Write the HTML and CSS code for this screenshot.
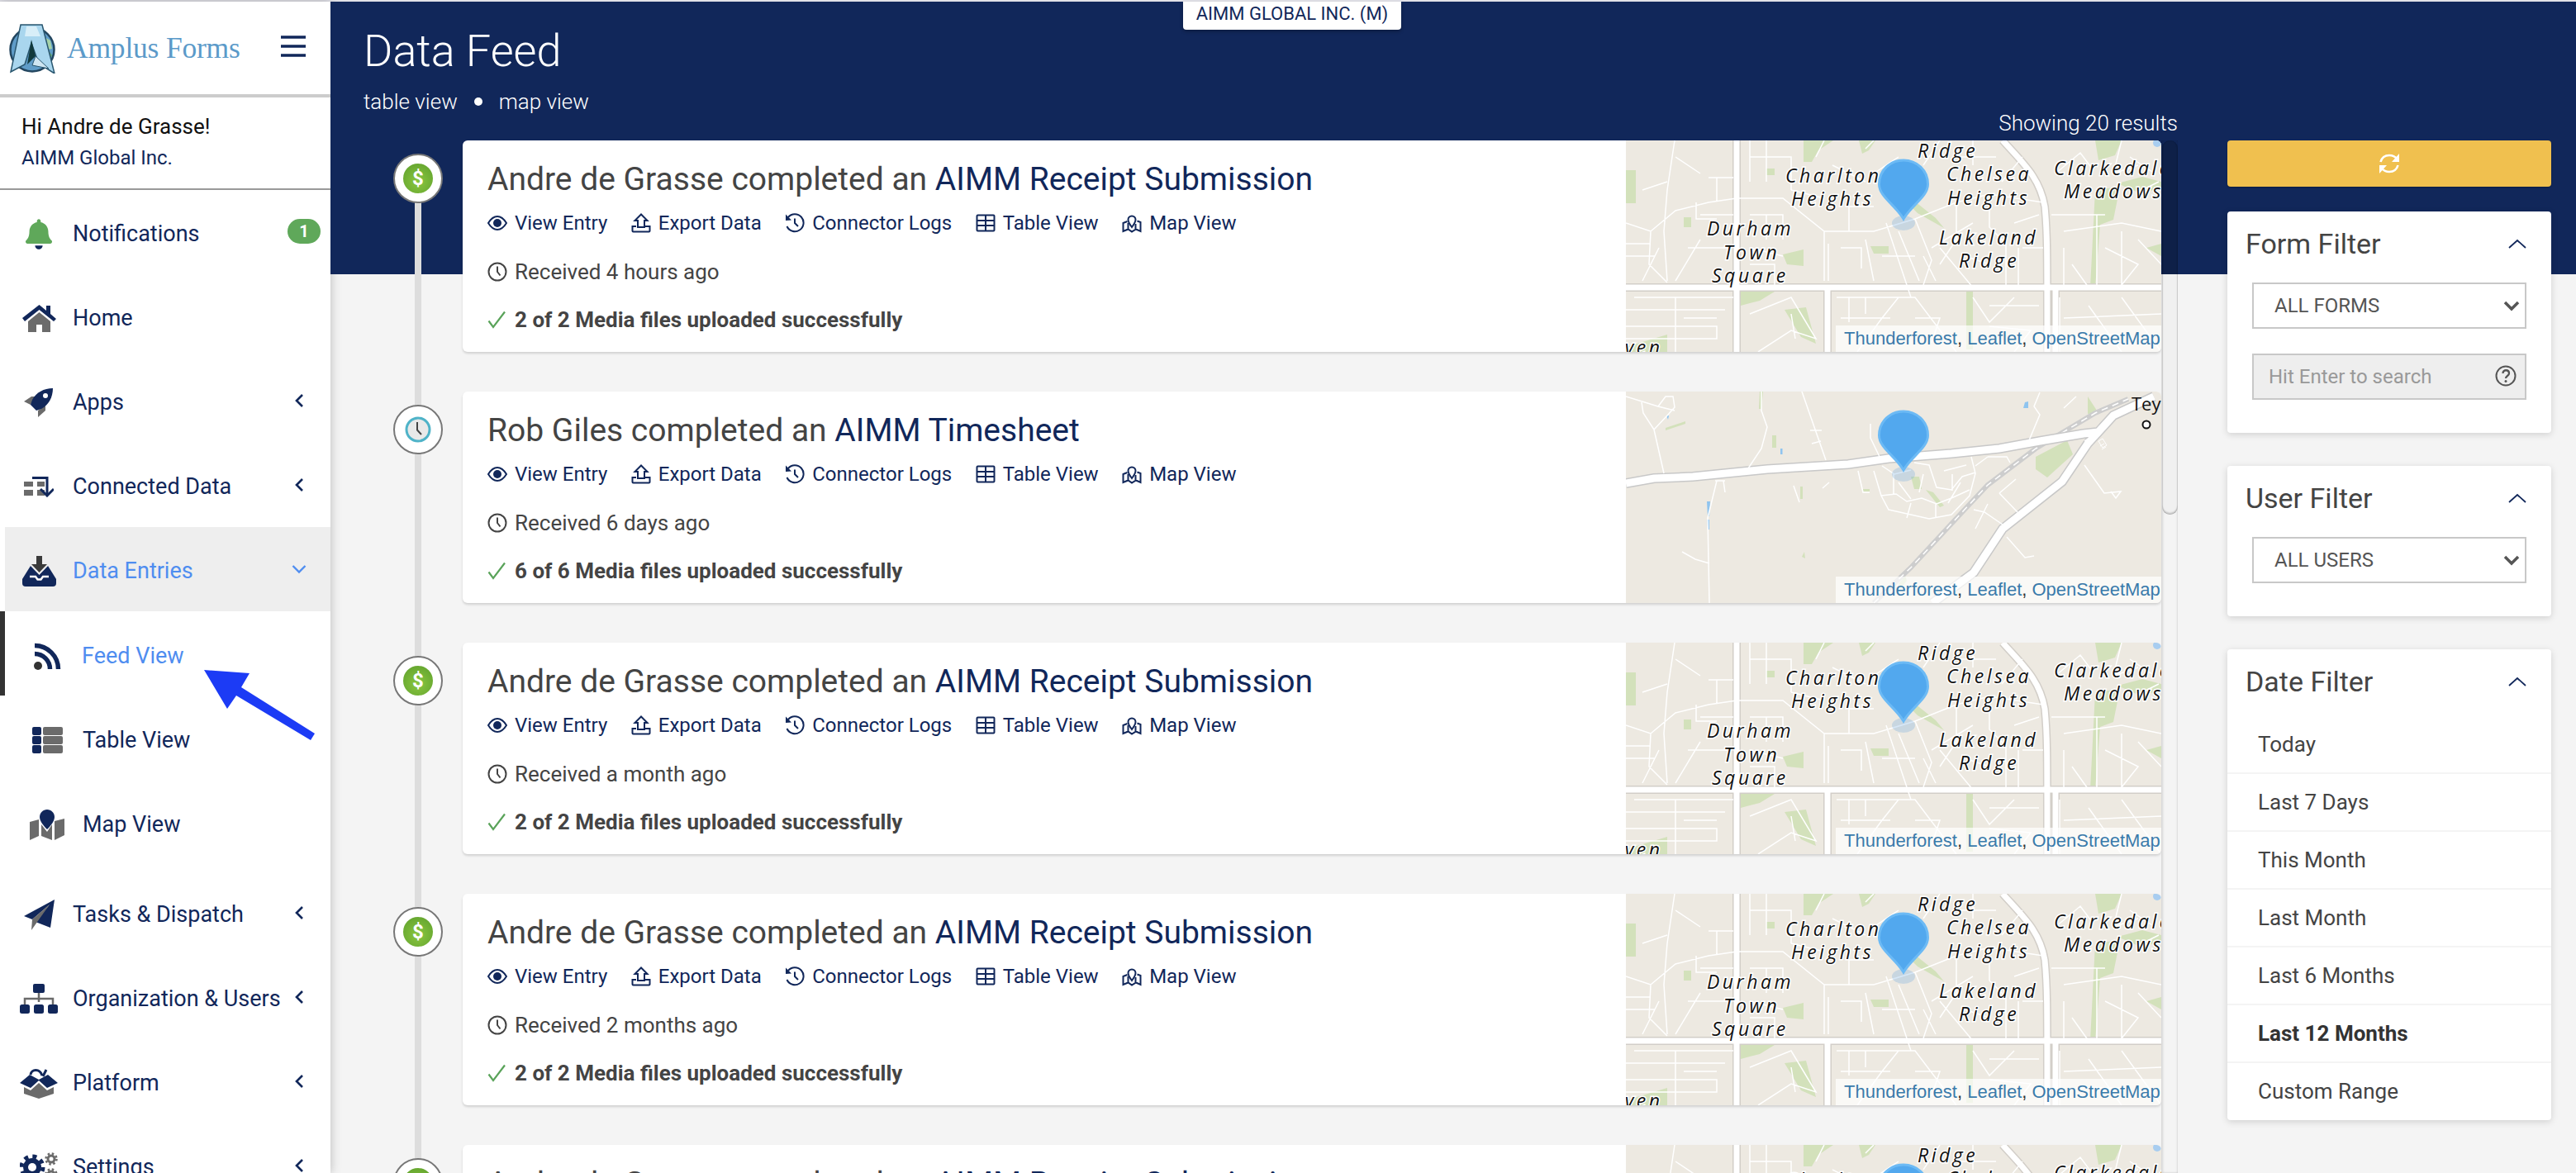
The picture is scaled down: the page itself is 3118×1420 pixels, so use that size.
FILE: index.html
```html
<!DOCTYPE html>
<html lang="en">
<head>
<meta charset="utf-8">
<title>Data Feed</title>
<link rel="stylesheet" href="styles.css">
</head>
<body>
<svg class="defs" width="0" height="0" aria-hidden="true">
  <defs>
    <symbol id="i-eye" viewBox="0 0 24 24"><path class="ln" d="M1 12C5 5.500 9 4 12 4s7 1.500 11 8c-4 6.500-8 8-11 8s-7-1.500-11-8z"/><circle class="fl" cx="12" cy="12" r="5"/></symbol>
    <symbol id="i-export" viewBox="0 0 24 24"><path class="ln" d="M6 16H1.500v5.500a1 1 0 0 0 1 1h19a1 1 0 0 0 1-1V16H17"/><path class="ln" d="M12 1.500 4.500 9H8v8h8V9h3.500z"/></symbol>
    <symbol id="i-logs" viewBox="0 0 24 24"><path class="ln" d="M4 5a10.500 10.500 0 1 1-1.500 11"/><path class="fl" d="M1 1.500 8 8.500 1 9z"/><path class="ln" d="M12 6.500V12l4 4"/></symbol>
    <symbol id="i-table" viewBox="0 0 24 24"><rect class="ln" x="1.500" y="2.500" width="21" height="19" rx="1"/><path class="ln" d="M1.500 9h21M1.500 15h21M12 2.500v19"/></symbol>
    <symbol id="i-map" viewBox="0 0 24 24"><path class="ln" d="M12 17c-3-4-4.500-6-4.500-9a4.500 4.500 0 0 1 9 0c0 3-1.500 5-4.500 9z"/><path class="ln" d="M6.500 10 1.500 12v10l6-2.500 4.500 3 5-3 5.500 2.500V11l-4-1.500M7.500 12v7M16.500 13v6.500"/></symbol>
    <symbol id="i-clock" viewBox="0 0 24 24"><circle cx="12" cy="12" r="10.500" fill="none" stroke="#444" stroke-width="2"/><path d="M12 5.500V12l3.500 4.500" fill="none" stroke="#444" stroke-width="2"/></symbol>
    <symbol id="i-check" viewBox="0 0 24 24"><path d="M1.500 13.500 7 21 21 2.500" fill="none" stroke="#5aa35a" stroke-width="2.200"/></symbol>

    <symbol id="map-a" viewBox="0 0 648 256">
      <rect width="648" height="256" fill="#ede9e1"/>
      <g fill="#d3e1bb">
        <rect x="0" y="36" width="12" height="40"/>
        <path d="M215 0h36l-18 12-8 14h-10z"/>
        <path d="M139 183h41l-18 11-12 3-11 3z"/>
        <path d="M192 205l26-3 12 44-18-8z"/>
        <path d="M0 250l50-15v21H0z"/>
        <path d="M568 0h32l-8 18-20 6z"/>
        <path d="M345 70l30 24 10 12-32-18-8-8z"/>
        <path d="M296 128h22v9h-18z"/>
        <path d="M190 138l25-6v20l-20-2z"/>
        <rect x="70" y="93" width="9" height="12"/>
        <rect x="170" y="34" width="10" height="8"/>
        <path d="M568 60l30-4-8 40-16 6-6 76h-6z"/>
        <rect x="412" y="183" width="8" height="70"/>
        <path d="M630 130l18-5v15z"/>
        <path d="M595 52l30-8 23 6v10l-30 2z"/>
        <path d="M282 0h20l-8 12-8 4z"/>
      </g>
      <circle cx="643" cy="3" r="5" fill="#a8cdf0"/>
      <path d="M134 0v256M0 178h648M456 0c25 28 45 45 51 80 3 30 3 50 3 176M244 178v78M520 178v78" fill="none" stroke="#d2cec8" stroke-width="10"/>
      <path d="M134 0v256M0 178h648M456 0c25 28 45 45 51 80 3 30 3 50 3 176M244 178v78M520 178v78" fill="none" stroke="#fff" stroke-width="7"/>
      <path d="M59 0 50 60l-4 50 4 60M0 100l30 10 30-25 40-10 34-5M30 110l-2 40 22 22M134 70h56l50 40h60l50-15 50-20 40-10 65 10M150 0v50M150 20h50v40M170 20v30M230 20l10-20M250 30l40 20M290 10l10-10M315 100l30 90M330 110l25 60M290 120l10 50M370 130l50-30M360 140l15 30M380 130l40 48M515 90h65M570 90v88M530 110l70-10 48 10M530 130v48M540 150l20 28M600 110v68M620 120l28 30M0 205h120M0 225h110v15H0M60 190v66M10 190h120M150 210l50-20 30 50-30-10-40 26M255 190h95l50 66M270 190v30M290 190v20M330 190l-20 25-30 41M420 190l20 30 30-30M440 200h60M525 190v66M530 215l118-5M560 200l40 56M600 190l48 66M170 0v20M200 60l40 10M60 20l30 20M20 60l30-10M240 110v60M350 95l20 50-10 30M400 75v45l-20 30M440 65v40l20 20v50M270 110V80h30M300 40l30-20M360 30l20-30M398 20h50M420 0v30M0 125h30M0 140h35M40 130l-20 40M85 75v20h25M90 90h40M100 45h30M110 45v28M150 90h40v30M170 90v30M150 130l40 10M260 130h25v25M245 125v45M310 140h40M410 140l30 10M470 100l30-10M480 130h25M475 130v45M150 150h30v25M90 120l-30 50M75 130h50M580 130l40 20-20 25M625 60l20-10M610 20l30 20M600 0l-10 40 30-10M480 20l-25 30M520 40l30-25 15 20M200 210l5 30M260 215h60M350 215h30l-10 30M440 225l50 5-20 26M545 235h60M70 215h40" fill="none" stroke="#fff" stroke-width="1.500"/>
      <g class="map-label">
        <text x="353" y="21">Ridge</text>
        <text x="193" y="51">Charlton</text>
        <text x="200" y="79">Heights</text>
        <text x="388" y="49">Chelsea</text>
        <text x="389" y="78">Heights</text>
        <text x="518" y="42">Clarkedale</text>
        <text x="530" y="70">Meadows</text>
        <text x="98" y="115">Durham</text>
        <text x="118" y="144">Town</text>
        <text x="104" y="172">Square</text>
        <text x="379" y="126">Lakeland</text>
        <text x="403" y="154">Ridge</text>
        <text x="-37" y="259">Haven</text>
      </g>
      <ellipse cx="336" cy="100" rx="14" ry="9" fill="#5aa0e1" fill-opacity=".25"/>
      <path d="M336 95c-10-17-29.500-27-29.500-42 0-17 13.500-29 29.500-29s29.500 12 29.500 29c0 15-19.500 25-29.500 42z" fill="#52a8ee" stroke="#6cbaf5" stroke-width="3"/>
    </symbol>

    <symbol id="map-b" viewBox="0 0 648 256">
      <rect width="648" height="256" fill="#ede9e1"/>
      <g fill="#d3e1bb">
        <path d="M162 0h4l-2 21h-3z"/>
        <path d="M48 44l24-8v3l-24 8z"/>
        <rect x="177" y="53" width="5" height="15"/>
        <path d="M345 103h10l3 15h-9z"/>
        <path d="M363 119l9 3 13 16-5 2z"/>
        <path d="M496 79l38-20 7 17-31 28-14-10z"/>
        <path d="M559 6l13 20-13 1z"/>
        <rect x="211" y="115" width="3" height="15"/>
        <rect x="287" y="118" width="8" height="3"/>
        <path d="M330 233l8-10 2 6-8 10z"/>
        <path d="M213 200l3-6 1 8z"/>
      </g>
      <g fill="#8fc4ef">
        <rect x="187" y="69" width="2.500" height="7"/>
        <path d="M98 133h4l-1 18h-2z"/>
        <path d="M98 155h3v12h-2z"/>
        <path d="M483 13l4-1v8h-6z"/>
        <path d="M49 29h3l-1 5z"/>
      </g>
      <path d="M300 256l45-43 62-67 31-33 58-44 72-43 40-17" fill="none" stroke="#cdcdcd" stroke-width="6"/>
      <path d="M300 256l45-43 62-67 31-33 58-44 72-43 40-17" fill="none" stroke="#fff" stroke-width="1.500" stroke-dasharray="8 6"/>
      <path d="M0 111l34-6 47-2 90-9 98-6 49-7 76-6 58-6 49-9 53-9 18-2M371 256l50-37 35-53 72-57 31-46 31-34 49-23" fill="none" stroke="#c8c8c8" stroke-width="12"/>
      <path d="M0 111l34-6 47-2 90-9 98-6 49-7 76-6 58-6 49-9 53-9 18-2M371 256l50-37 35-53 72-57 31-46 31-34 49-23" fill="none" stroke="#fff" stroke-width="9"/>
      <path d="M0 6l39 12 20 5M39 18l9-12h9l2 13-9 10-16 17-13-20-2-13M34 46l12 53M164 0v23l7 20-7 26-16 24M213 0l29 83M110 108 99 153l2 103M68 194l16 9 17 5M296 39v17l13 27M501 1l-7 17 7 10-13 31M555 89l24 34 20-2-6 8-6-8M461 176l22 25 11-2M300 96l9 30 9 17 49 11 27-5 22-23 7-27-5-20M309 126l18-2 13 9 18-4 18 7 18-7 22-10M349 86l18 3 9 27 18 3 13-16 16-5M385 96l27-7M324 100v24M421 143l13 3 22 15M438 136l-15 30M452 123l20-17M452 123l22 23M438 79h23l4 7M423 90l15-11M530 20l15-14M555 60l15-10M203 114l7 20M246 110l-8 7M281 96l6 26h8M108 108h12M118 108l2 14M223 47h14M225 63l11-3M310 90l15 10 20-5M330 110l15 20M360 100l-5 22M395 100v20M405 110l-15 25M345 135l-5 18M375 136v16" fill="none" stroke="#fff" stroke-width="1.500"/>
      <path d="M572 60l5-3 5 8-5 3zM574 66l5-3M576 70l5-3" fill="none" stroke="#fff" stroke-width="1"/>
      <text class="map-town" x="612" y="23">Teyon</text>
      <circle cx="630" cy="40" r="4.500" fill="#fff" stroke="#111" stroke-width="2"/>
      <ellipse cx="336" cy="100" rx="14" ry="9" fill="#5aa0e1" fill-opacity=".25"/>
      <path d="M336 95c-10-17-29.500-27-29.500-42 0-17 13.500-29 29.500-29s29.500 12 29.500 29c0 15-19.500 25-29.500 42z" fill="#52a8ee" stroke="#6cbaf5" stroke-width="3"/>
    </symbol>
  </defs>
</svg>

<div class="topstrip"></div>
<div class="app">
  <aside class="sidebar">
    <div class="brand">
      <svg class="logo" width="58" height="60" viewBox="0 0 58 60">
        <circle cx="29" cy="31" r="26.500" fill="#5f9cc8" stroke="#23465f" stroke-width="2.500"/>
        <path d="M30 50c10 1 18-3 23-12l-6-8-14 10z" fill="#62a869"/>
        <path d="M37 12l14 8 2 10-10 2-8-8z" fill="#a6d2a8"/>
        <path d="M15 1h26l15 59-19-12-9-25-8 26-17 9z" fill="#a9d6ee" stroke="#29566f" stroke-width="1.500"/>
        <path d="M22 3h12l5 12H20z" fill="#d8eef8"/>
        <path d="M28 19l5 20-6 6-4 4z" fill="#123a3c"/>
        <path d="M33 39l16 15-20-4z" fill="#cfe6f2" stroke="#29566f"/>
      </svg>
      <span class="brand-name">Amplus Forms</span>
      <svg class="burger" width="30" height="26" viewBox="0 0 30 26"><path d="M0 2h30M0 13h30M0 24h30" stroke="#11275a" stroke-width="3.500"/></svg>
    </div>
    <div class="user">
      <div class="user-name">Hi Andre de Grasse!</div>
      <div class="user-org">AIMM Global Inc.</div>
    </div>
    <nav class="nav">
      <a class="nav-item">
        <span class="ic"><svg width="32" height="37" viewBox="0 0 448 512"><path fill="#11275a" d="M224 512c35.320 0 63.970-28.650 63.970-64H160.030c0 35.350 28.650 64 63.970 64z"/><path fill="#5fa85a" d="M439.390 362.290c-19.320-20.760-55.470-51.990-55.470-154.290 0-77.700-54.480-139.900-127.940-155.160V32c0-17.670-14.320-32-31.980-32s-31.980 14.330-31.980 32v20.840C118.560 68.100 64.080 130.300 64.080 208c0 102.300-36.150 133.530-55.470 154.290-6 6.450-8.660 14.160-8.610 21.710.11 16.400 12.980 32 32.100 32h383.800c19.120 0 32-15.600 32.100-32 .05-7.550-2.610-15.270-8.610-21.710z"/></svg></span>
        <span class="nav-text">Notifications</span>
        <span class="badge">1</span>
      </a>
      <a class="nav-item">
        <span class="ic"><svg width="41" height="33" viewBox="0 0 41 33"><path fill="#6b6b6b" d="M7 20 20.500 9 34 20v13H24v-9h-7v9H7z"/><path fill="#11275a" d="M0 16 20.500 0 29 7V1h5v10l7 6-3 3L20.500 6 3 20z"/></svg></span>
        <span class="nav-text">Home</span>
      </a>
      <a class="nav-item">
        <span class="ic"><svg width="36" height="36" viewBox="0 0 36 36"><path fill="#6b6b6b" d="M0 17l9-6h5l-6 10zM17 36l9-8v-6l-9 6z"/><path fill="#11275a" d="M35 1C24 1 15 6 10 15l-2 6 7 7 6-2c9-5 14-14 14-25z"/><circle cx="26" cy="10" r="3" fill="#fff"/></svg></span>
        <span class="nav-text">Apps</span>
        <svg class="chev" width="12" height="18" viewBox="0 0 12 18"><path d="M10 2 3 9l7 7" fill="none" stroke="#11275a" stroke-width="2.600"/></svg>
      </a>
      <a class="nav-item">
        <span class="ic"><svg width="36" height="25" viewBox="0 0 36 25"><path fill="#6b6b6b" d="M0 6h11v6H0zM0 16h11v7H0zM16 6h9v6h-9zM16 16h9v7h-9z"/><path d="M10 1.500h18V22" fill="none" stroke="#11275a" stroke-width="3"/><path d="M20 15l8 8 8-8" fill="none" stroke="#11275a" stroke-width="3"/></svg></span>
        <span class="nav-text">Connected Data</span>
        <svg class="chev" width="12" height="18" viewBox="0 0 12 18"><path d="M10 2 3 9l7 7" fill="none" stroke="#11275a" stroke-width="2.600"/></svg>
      </a>
      <a class="nav-item is-open">
        <span class="ic"><svg width="41" height="37" viewBox="0 0 41 37"><path fill="#11275a" d="M10 12h21l10 16v5a4 4 0 0 1-4 4H4a4 4 0 0 1-4-4v-5z"/><path fill="#eee" d="M15 3h11v6h8L20.500 23 7 9h8z"/><path fill="#3a3a3a" d="M17 0h7v10h6L20.500 20 11 10h6z"/><path d="M9 25h7l2.500 3.500h4L25 25h7" fill="none" stroke="#fff" stroke-width="2.400"/></svg></span>
        <span class="nav-text">Data Entries</span>
        <svg class="chev-down" width="18" height="12" viewBox="0 0 18 12"><path d="M1.500 2 9 9.500 16.500 2" fill="none" stroke="#4f8df0" stroke-width="2.400"/></svg>
      </a>
      <div class="subnav">
        <a class="sub-item is-active">
          <span class="ic-sub"><svg width="33" height="33" viewBox="0 0 33 33"><circle cx="5" cy="28" r="5" fill="#333"/><path d="M1 13.500A18.500 18.500 0 0 1 19.500 32M1 3.500A28.500 28.500 0 0 1 29.500 32" fill="none" stroke="#11275a" stroke-width="5.500"/></svg></span>
          <span class="nav-text">Feed View</span>
        </a>
        <a class="sub-item">
          <span class="ic-sub"><svg width="37" height="32" viewBox="0 0 37 32"><path fill="#11275a" d="M0 2a2 2 0 0 1 2-2h7a2 2 0 0 1 2 2v6a2 2 0 0 1-2 2H2a2 2 0 0 1-2-2zM0 13a2 2 0 0 1 2-2h7a2 2 0 0 1 2 2v6a2 2 0 0 1-2 2H2a2 2 0 0 1-2-2zM0 24a2 2 0 0 1 2-2h7a2 2 0 0 1 2 2v6a2 2 0 0 1-2 2H2a2 2 0 0 1-2-2z"/><path fill="#6b6b6b" d="M13 2a2 2 0 0 1 2-2h20a2 2 0 0 1 2 2v6a2 2 0 0 1-2 2H15a2 2 0 0 1-2-2zM13 13a2 2 0 0 1 2-2h20a2 2 0 0 1 2 2v6a2 2 0 0 1-2 2H15a2 2 0 0 1-2-2zM13 24a2 2 0 0 1 2-2h20a2 2 0 0 1 2 2v6a2 2 0 0 1-2 2H15a2 2 0 0 1-2-2z"/></svg></span>
          <span class="nav-text">Table View</span>
        </a>
        <a class="sub-item">
          <span class="ic-sub"><svg width="42" height="37" viewBox="0 0 42 37"><path fill="#6b6b6b" d="M0 15l11-3v20L0 37zM14 18l7 9 6-9v19l-13-5zM30 14l12-3v20l-12 6z"/><path fill="#11275a" d="M21 0c5 0 9 4 9 9 0 5-5 11-9 15-4-4-9-10-9-15 0-5 4-9 9-9z"/></svg></span>
          <span class="nav-text">Map View</span>
        </a>
      </div>
      <a class="nav-item">
        <span class="ic"><svg width="37" height="37" viewBox="0 0 37 37"><path fill="#11275a" d="M37 0 0 20l10 4L31 6 14 27l18 7z"/><path fill="#6b6b6b" d="M10 24 31 6 9 37z"/></svg></span>
        <span class="nav-text">Tasks &amp; Dispatch</span>
        <svg class="chev" width="12" height="18" viewBox="0 0 12 18"><path d="M10 2 3 9l7 7" fill="none" stroke="#11275a" stroke-width="2.600"/></svg>
      </a>
      <a class="nav-item">
        <span class="ic"><svg width="46" height="36" viewBox="0 0 46 36"><path d="M23 11v11M6 25v-7h34v7" fill="none" stroke="#6b6b6b" stroke-width="2.500"/><rect x="16" width="14" height="11" rx="2" fill="#11275a"/><rect y="25" width="12" height="11" rx="2.500" fill="#11275a"/><rect x="17" y="25" width="12" height="11" rx="2.500" fill="#11275a"/><rect x="34" y="25" width="12" height="11" rx="2.500" fill="#11275a"/></svg></span>
        <span class="nav-text">Organization &amp; Users</span>
        <svg class="chev" width="12" height="18" viewBox="0 0 12 18"><path d="M10 2 3 9l7 7" fill="none" stroke="#11275a" stroke-width="2.600"/></svg>
      </a>
      <a class="nav-item">
        <span class="ic"><svg width="46" height="37" viewBox="0 0 46 37"><path fill="#6b6b6b" d="M5 23l8 4 10-9 10 9 8-4v8l-18 6-18-6z"/><path fill="#11275a" d="M0 18 12 8l11 6 11-6 12 10-13 6-10-9-10 9z"/><path d="M13 8c1-7 11-8 14 1M32 2l-4 8" fill="none" stroke="#11275a" stroke-width="3"/></svg></span>
        <span class="nav-text">Platform</span>
        <svg class="chev" width="12" height="18" viewBox="0 0 12 18"><path d="M10 2 3 9l7 7" fill="none" stroke="#11275a" stroke-width="2.600"/></svg>
      </a>
      <a class="nav-item">
        <span class="ic"><svg width="46" height="46" viewBox="0 0 46 46"><circle cx="15" cy="23" r="11" fill="#11275a"/><circle cx="15" cy="23" r="13" fill="none" stroke="#11275a" stroke-width="5" stroke-dasharray="5 5.200"/><circle cx="15" cy="23" r="5" fill="#fff"/><circle cx="38" cy="13" r="4" fill="none" stroke="#6b6b6b" stroke-width="3"/><circle cx="38" cy="13" r="6.500" fill="none" stroke="#6b6b6b" stroke-width="2.500" stroke-dasharray="2.500 2.600"/><circle cx="38" cy="32" r="4" fill="none" stroke="#6b6b6b" stroke-width="3"/><circle cx="38" cy="32" r="6.500" fill="none" stroke="#6b6b6b" stroke-width="2.500" stroke-dasharray="2.500 2.600"/></svg></span>
        <span class="nav-text">Settings</span>
        <svg class="chev" width="12" height="18" viewBox="0 0 12 18"><path d="M10 2 3 9l7 7" fill="none" stroke="#11275a" stroke-width="2.600"/></svg>
      </a>
    </nav>
    <svg class="callout" width="145" height="95" viewBox="0 0 145 95"><path fill="#1c3bf5" d="M7 6l55 4-10 17 89 56-5 8-90-54-11 16z"/></svg>
  </aside>

  <main class="main">
    <div class="band">
      <div class="account-tab">AIMM GLOBAL INC. (M)</div>
      <h1 class="page-title">Data Feed</h1>
      <div class="view-links"><span>table view</span><span class="dot"></span><span>map view</span></div>
    </div>
    <div class="content">
      <section class="feed">
        <div class="feed-count">Showing 20 results</div>
        <div class="feed-row">
          <div class="list">

            <article class="item">
              <div class="marker"><span class="pin-money">$</span></div>
              <div class="card">
                <div class="card-body">
                  <h2 class="card-title">Andre de Grasse completed an <a>AIMM Receipt Submission</a></h2>
                  <div class="links">
                    <a class="lnk"><svg class="lnk-ic"><use href="#i-eye"/></svg>View Entry</a>
                    <a class="lnk"><svg class="lnk-ic"><use href="#i-export"/></svg>Export Data</a>
                    <a class="lnk"><svg class="lnk-ic"><use href="#i-logs"/></svg>Connector Logs</a>
                    <a class="lnk"><svg class="lnk-ic"><use href="#i-table"/></svg>Table View</a>
                    <a class="lnk"><svg class="lnk-ic"><use href="#i-map"/></svg>Map View</a>
                  </div>
                  <div class="meta"><svg class="lnk-ic"><use href="#i-clock"/></svg>Received 4 hours ago</div>
                  <div class="status"><svg class="lnk-ic"><use href="#i-check"/></svg>2 of 2 Media files uploaded successfully</div>
                </div>
                <div class="map">
                  <svg class="map-svg"><use href="#map-a"/></svg>
                  <div class="attribution"><a>Thunderforest</a>, <a>Leaflet</a>, <a>OpenStreetMap</a></div>
                </div>
              </div>
            </article>

            <article class="item">
              <div class="marker"><svg width="32" height="32" viewBox="0 0 32 32"><circle cx="16" cy="16" r="14" fill="#e9e9e9" stroke="#4fb3c8" stroke-width="3"/><path d="M15 7v9.500l5 5.500" fill="none" stroke="#444" stroke-width="2"/></svg></div>
              <div class="card">
                <div class="card-body">
                  <h2 class="card-title">Rob Giles completed an <a>AIMM Timesheet</a></h2>
                  <div class="links">
                    <a class="lnk"><svg class="lnk-ic"><use href="#i-eye"/></svg>View Entry</a>
                    <a class="lnk"><svg class="lnk-ic"><use href="#i-export"/></svg>Export Data</a>
                    <a class="lnk"><svg class="lnk-ic"><use href="#i-logs"/></svg>Connector Logs</a>
                    <a class="lnk"><svg class="lnk-ic"><use href="#i-table"/></svg>Table View</a>
                    <a class="lnk"><svg class="lnk-ic"><use href="#i-map"/></svg>Map View</a>
                  </div>
                  <div class="meta"><svg class="lnk-ic"><use href="#i-clock"/></svg>Received 6 days ago</div>
                  <div class="status"><svg class="lnk-ic"><use href="#i-check"/></svg>6 of 6 Media files uploaded successfully</div>
                </div>
                <div class="map">
                  <svg class="map-svg"><use href="#map-b"/></svg>
                  <div class="attribution"><a>Thunderforest</a>, <a>Leaflet</a>, <a>OpenStreetMap</a></div>
                </div>
              </div>
            </article>

            <article class="item">
              <div class="marker"><span class="pin-money">$</span></div>
              <div class="card">
                <div class="card-body">
                  <h2 class="card-title">Andre de Grasse completed an <a>AIMM Receipt Submission</a></h2>
                  <div class="links">
                    <a class="lnk"><svg class="lnk-ic"><use href="#i-eye"/></svg>View Entry</a>
                    <a class="lnk"><svg class="lnk-ic"><use href="#i-export"/></svg>Export Data</a>
                    <a class="lnk"><svg class="lnk-ic"><use href="#i-logs"/></svg>Connector Logs</a>
                    <a class="lnk"><svg class="lnk-ic"><use href="#i-table"/></svg>Table View</a>
                    <a class="lnk"><svg class="lnk-ic"><use href="#i-map"/></svg>Map View</a>
                  </div>
                  <div class="meta"><svg class="lnk-ic"><use href="#i-clock"/></svg>Received a month ago</div>
                  <div class="status"><svg class="lnk-ic"><use href="#i-check"/></svg>2 of 2 Media files uploaded successfully</div>
                </div>
                <div class="map">
                  <svg class="map-svg"><use href="#map-a"/></svg>
                  <div class="attribution"><a>Thunderforest</a>, <a>Leaflet</a>, <a>OpenStreetMap</a></div>
                </div>
              </div>
            </article>

            <article class="item">
              <div class="marker"><span class="pin-money">$</span></div>
              <div class="card">
                <div class="card-body">
                  <h2 class="card-title">Andre de Grasse completed an <a>AIMM Receipt Submission</a></h2>
                  <div class="links">
                    <a class="lnk"><svg class="lnk-ic"><use href="#i-eye"/></svg>View Entry</a>
                    <a class="lnk"><svg class="lnk-ic"><use href="#i-export"/></svg>Export Data</a>
                    <a class="lnk"><svg class="lnk-ic"><use href="#i-logs"/></svg>Connector Logs</a>
                    <a class="lnk"><svg class="lnk-ic"><use href="#i-table"/></svg>Table View</a>
                    <a class="lnk"><svg class="lnk-ic"><use href="#i-map"/></svg>Map View</a>
                  </div>
                  <div class="meta"><svg class="lnk-ic"><use href="#i-clock"/></svg>Received 2 months ago</div>
                  <div class="status"><svg class="lnk-ic"><use href="#i-check"/></svg>2 of 2 Media files uploaded successfully</div>
                </div>
                <div class="map">
                  <svg class="map-svg"><use href="#map-a"/></svg>
                  <div class="attribution"><a>Thunderforest</a>, <a>Leaflet</a>, <a>OpenStreetMap</a></div>
                </div>
              </div>
            </article>

            <article class="item">
              <div class="marker"><span class="pin-money">$</span></div>
              <div class="card">
                <div class="card-body">
                  <h2 class="card-title">Andre de Grasse completed an <a>AIMM Receipt Submission</a></h2>
                </div>
                <div class="map">
                  <svg class="map-svg"><use href="#map-a"/></svg>
                </div>
              </div>
            </article>

          </div>
          <div class="scrollbar"><div class="scroll-thumb"></div></div>
        </div>
      </section>

      <aside class="filters">
        <button class="refresh" type="button" aria-label="Refresh">
          <svg width="28" height="26" viewBox="0 0 28 26"><path d="M3.500 11C5 5.500 9 3 14 3c4 0 7 1.500 9.500 4.500M24.500 15c-1.500 5.500-5.500 8-10.500 8-4 0-7-1.500-9.500-4.500" fill="none" stroke="#fff" stroke-width="2.600"/><path d="M26 1v10h-9zM2 25V15h9z" fill="#fff"/></svg>
        </button>
        <section class="panel panel-form">
          <header class="panel-head"><h3>Form Filter</h3><svg width="22" height="12" viewBox="0 0 22 12"><path d="M1 11 11 2l10 9" fill="none" stroke="#11275a" stroke-width="1.800"/></svg></header>
          <div class="field">
            <select class="select"><option>ALL FORMS</option></select>
            <svg class="field-ic" width="20" height="14" viewBox="0 0 20 14"><path d="M2 3l8 8 8-8" fill="none" stroke="#555" stroke-width="3.500"/></svg>
          </div>
          <div class="field">
            <input class="search" type="text" placeholder="Hit Enter to search">
            <svg class="help-ic" width="26" height="26" viewBox="0 0 26 26"><circle cx="13" cy="13" r="11.500" fill="none" stroke="#555" stroke-width="2"/><path d="M9.500 10c0-5 7.500-5 7.500 0 0 3-4 3-4 6" fill="none" stroke="#555" stroke-width="2.300"/><circle cx="13" cy="19.500" r="1.500" fill="#555"/></svg>
          </div>
        </section>
        <section class="panel panel-user">
          <header class="panel-head"><h3>User Filter</h3><svg width="22" height="12" viewBox="0 0 22 12"><path d="M1 11 11 2l10 9" fill="none" stroke="#11275a" stroke-width="1.800"/></svg></header>
          <div class="field">
            <select class="select"><option>ALL USERS</option></select>
            <svg class="field-ic" width="20" height="14" viewBox="0 0 20 14"><path d="M2 3l8 8 8-8" fill="none" stroke="#555" stroke-width="3.500"/></svg>
          </div>
        </section>
        <section class="panel panel-date">
          <header class="panel-head"><h3>Date Filter</h3><svg width="22" height="12" viewBox="0 0 22 12"><path d="M1 11 11 2l10 9" fill="none" stroke="#11275a" stroke-width="1.800"/></svg></header>
          <ul class="ranges">
            <li>Today</li>
            <li>Last 7 Days</li>
            <li>This Month</li>
            <li>Last Month</li>
            <li>Last 6 Months</li>
            <li class="is-current">Last 12 Months</li>
            <li>Custom Range</li>
          </ul>
        </section>
      </aside>
    </div>
  </main>
</div>
</body>
</html>
```
FILE: styles.css
```css
* { box-sizing: border-box; }
html, body { margin: 0; height: 1420px; overflow: hidden; }
body { background: #f4f4f4; font-family: Roboto, "Liberation Sans", sans-serif; color: #444; }
a { color: inherit; text-decoration: none; }
h1, h2, h3, ul { margin: 0; padding: 0; font-weight: 400; }
.defs { position: absolute; }
.ln { fill: none; stroke: #11275a; stroke-width: 2; }
.fl { fill: #11275a; }

.topstrip { height: 2px; background: #e1e1e8; }
.app { display: flex; height: 1418px; }

/* Sidebar */
.sidebar { position: relative; z-index: 2; width: 400px; flex: none; background: #fff; box-shadow: 0 0 12px rgba(0,0,0,.25); }
.brand { height: 116px; display: flex; align-items: center; padding: 0 30px 0 10px; border-bottom: 4px solid #ccc; }
.logo { flex: none; margin-top: 2px; }
.brand-name { margin-left: 13px; font-family: "Liberation Serif", serif; font-size: 35.500px; color: #5b9ac9; letter-spacing: -.2px; }
.burger { margin-left: auto; margin-top: -4px; }
.user { height: 112px; padding: 20px 0 0 26px; border-bottom: 2px solid #999; }
.user-name { font-size: 26px; line-height: 30px; color: #111; }
.user-org { font-size: 24px; line-height: 30px; margin-top: 8px; color: #11275a; }
.nav-item { display: flex; align-items: center; height: 102px; margin-left: 6px; padding: 4px 32px 0 18px; color: #11275a; font-size: 27px; }
.subnav ~ .nav-item { padding-top: 0; }
.ic { width: 46px; margin-right: 18px; flex: none; display: flex; justify-content: center; }
.nav-text { white-space: nowrap; }
.badge { margin-left: auto; margin-right: -20px; margin-top: -6px; width: 40px; height: 30px; border-radius: 15px; background: #5fa85a; color: #fff; font-size: 20px; font-weight: 700; display: flex; align-items: center; justify-content: center; }
.chev { margin-left: auto; margin-top: -4px; }
.chev-down { margin-left: auto; margin-right: -3px; margin-top: -4px; }
.is-open { background: #eee; }
.is-open .nav-text { color: #4f8df0; }
.subnav { padding-bottom: 10px; }
.sub-item { display: flex; align-items: center; height: 102px; padding: 6px 0 0 36px; color: #11275a; font-size: 27px; }
.ic-sub { width: 42px; margin-right: 22px; flex: none; display: flex; justify-content: center; }
.sub-item.is-active { border-left: 6px solid #333; padding-left: 30px; }
.sub-item.is-active .nav-text { color: #4f8df0; }
.sub-item.is-active .ic-sub { margin-right: 21px; }
.callout { position: absolute; left: 240px; top: 803px; }

/* Main */
.main { flex: 1; min-width: 0; }
.band { position: relative; z-index: 3; height: 330px; background: #11275a; padding: 30px 0 0 40px; color: #fff; }
.account-tab { position: absolute; left: 1032px; top: 0; width: 264px; height: 34px; background: #fff; border-radius: 0 0 4px 4px; box-shadow: 0 2px 4px rgba(0,0,0,.3); color: #11275a; font-size: 22px; line-height: 30px; text-align: center; }
.page-title { font-size: 54px; line-height: 60px; font-weight: 300; }
.view-links { display: flex; align-items: center; gap: 20px; margin-top: 16px; font-size: 26px; line-height: 30px; font-weight: 300; }
.dot { width: 10px; height: 10px; border-radius: 50%; background: #fff; }

.content { position: relative; z-index: 4; display: flex; margin-top: -196px; height: 1284px; }
.feed { width: 2236px; flex: none; display: flex; flex-direction: column; }
.feed-count { height: 34px; text-align: right; color: #fff; font-size: 26px; line-height: 26px; font-weight: 300; }
.feed-row { display: flex; flex: 1; min-height: 0; }
.list { position: relative; flex: 1; display: flex; flex-direction: column; gap: 48px; overflow: hidden; }
.list::before { content: ""; position: absolute; left: 102px; top: 40px; bottom: 0; width: 8px; background: #ddd; }
.item { position: relative; display: flex; flex: none; height: 256px; }
.marker { width: 60px; height: 60px; margin: 16px 24px 0 76px; flex: none; border-radius: 50%; background: #fff; border: 2px solid #777; display: flex; align-items: center; justify-content: center; }
.pin-money { width: 36px; height: 36px; border-radius: 50%; background: radial-gradient(circle at 50% 60%, #8ac63f, #5c9e2c); color: #fff; font-size: 24px; font-weight: 700; line-height: 36px; text-align: center; }
.card { flex: 1; display: flex; background: #fff; border-radius: 6px; overflow: hidden; box-shadow: 0 2px 3px rgba(0,0,0,.15); }
.card-body { flex: 1; min-width: 0; padding: 24px 0 0 30px; }
.card-title { font-size: 39px; line-height: 46px; color: #444; white-space: nowrap; }
.card-title a { color: #11275a; }
.links { display: flex; gap: 28.500px; margin-top: 15px; font-size: 24px; line-height: 30px; color: #11275a; }
.lnk { display: flex; align-items: center; white-space: nowrap; }
.lnk-ic { width: 24px; height: 24px; margin-right: 9px; flex: none; }
.meta, .status { display: flex; align-items: center; margin-top: 29px; font-size: 26px; line-height: 30px; color: #444; }
.status { font-weight: 700; margin-top: 28px; }
.map { position: relative; width: 648px; flex: none; overflow: hidden; }
.map-svg { display: block; width: 648px; height: 256px; }
.map-label text { font-family: "Open Sans", sans-serif; font-style: italic; font-size: 23px; letter-spacing: 3.500px; fill: #111; stroke: #fff; stroke-width: 3px; paint-order: stroke; }
.map-town { font-family: "Open Sans", sans-serif; font-size: 22px; fill: #111; }
.attribution { position: absolute; left: 254px; bottom: 0; width: 420px; height: 32px; padding-left: 10px; background: rgba(255,255,255,.7); font-family: "Liberation Sans", sans-serif; font-size: 22px; line-height: 32px; color: #333; white-space: nowrap; }
.attribution a { color: #3a7bab; }
.scrollbar { width: 20px; flex: none; box-shadow: inset 2px 0 3px rgba(0,0,0,.12), inset -1px 0 2px rgba(0,0,0,.1); }
.scroll-thumb { height: 453px; border-radius: 10px; margin-left: 1px; background: linear-gradient(#0e2048 162px, #f0f0f0 162px); box-shadow: inset 0 -2px 2px rgba(0,0,0,.2), inset 1px 0 1px rgba(0,0,0,.12), inset -1px 0 1px rgba(0,0,0,.12); }

/* Filters */
.filters { width: 392px; flex: none; margin-left: 60px; padding-top: 34px; }
.refresh { display: flex; align-items: center; justify-content: center; width: 100%; height: 56px; padding: 0; border: 0; border-radius: 4px; background: #f0c04f; box-shadow: 0 1px 2px rgba(0,0,0,.3); }
.panel { background: #fff; border-radius: 4px; box-shadow: 0 2px 8px rgba(0,0,0,.15); }
.panel-form { margin-top: 30px; height: 268px; }
.panel-user { margin-top: 40px; height: 182px; }
.panel-date { margin-top: 40px; height: 570px; }
.panel-head { display: flex; align-items: center; justify-content: space-between; padding: 0 30px 0 22px; height: 78px; }
.panel-head h3 { font-size: 34px; line-height: 40px; color: #444; }
.field { position: relative; margin: 8px 30px 0; height: 56px; }
.field + .field { margin-top: 30px; }
.select, .search { display: block; width: 100%; height: 56px; border: 2px solid #c8c8c8; border-radius: 0; font-family: Roboto, sans-serif; font-size: 24px; color: #555; outline: 0; }
.select { appearance: none; background: #fff; padding-left: 25px; }
.search { background: #eee; padding: 0 50px 0 18px; }
.search::placeholder { color: #999; opacity: 1; }
.field-ic { position: absolute; right: 8px; top: 21px; }
.help-ic { position: absolute; right: 12px; top: 14px; }
.ranges { list-style: none; margin-top: 3px; }
.ranges li { height: 70px; padding-top: 19px; padding-left: 37px; font-size: 26px; line-height: 30px; color: #444; border-bottom: 2px solid #f4f4f4; }
.ranges li:last-child { border-bottom: 0; }
.ranges .is-current { font-weight: 700; color: #333; }
```
